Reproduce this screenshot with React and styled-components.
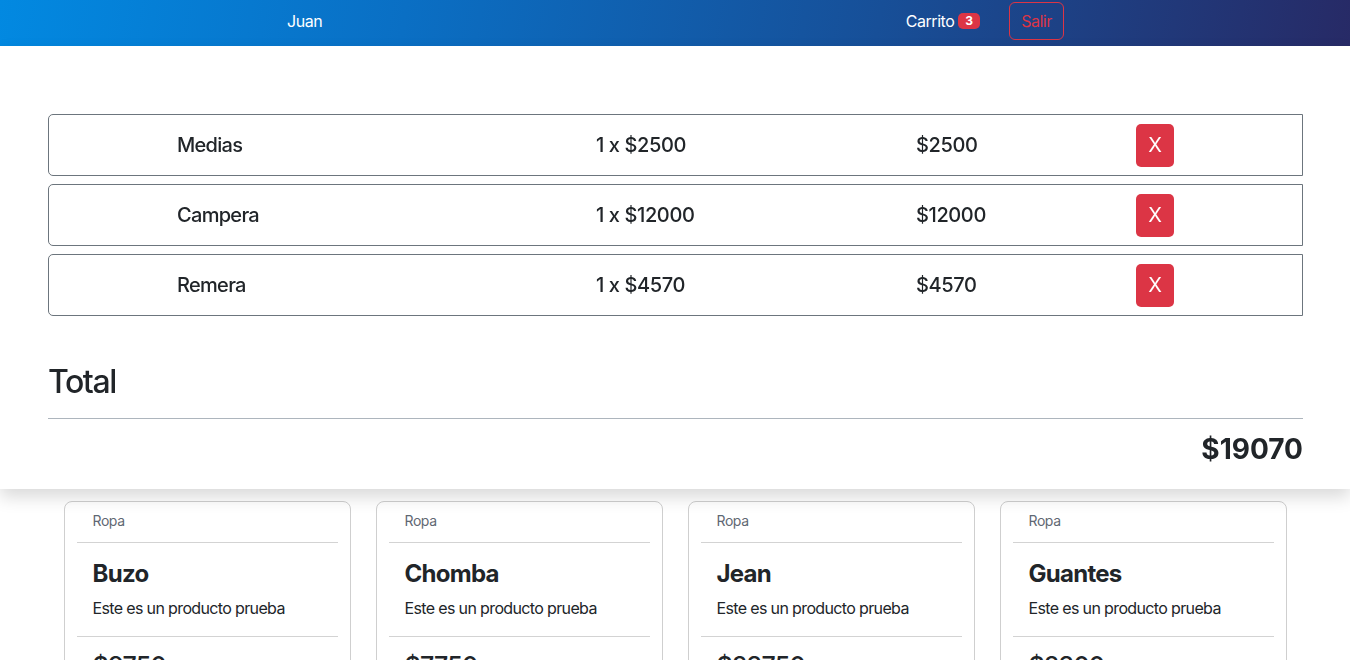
import React from "react";
import styled, { createGlobalStyle } from "styled-components";

const Global = createGlobalStyle`
  html, body { margin: 0; padding: 0; background: #fff; }
  body { font-family: Inter, "Noto Sans", sans-serif; color: #212529; }
  * { box-sizing: border-box; }
`;

const Nav = styled.nav`
  height: 46px;
  background: linear-gradient(100deg, #0289e1 0%, #0a6fc4 30%, #174f98 65%, #272a66 100%);
  display: flex;
  align-items: center;
  padding: 0 286px 4px 287px;
`;

const NavUser = styled.span`
  color: #fff;
  font-size: 16px;
  letter-spacing: -0.03em;
  flex: 1;
`;

const CartLink = styled.span`
  color: #fff;
  font-size: 16px;
  letter-spacing: -0.03em;
  display: flex;
  align-items: center;
  gap: 4px;
  margin-right: 29px;
`;

const Badge = styled.span`
  background: #dc3545;
  color: #fff;
  font-size: 12px;
  font-weight: 700;
  letter-spacing: 0;
  border-radius: 5px;
  padding: 1px 7px;
  line-height: 14px;
`;

const OutlineButton = styled.button`
  font-family: inherit;
  font-size: 16px;
  letter-spacing: -0.03em;
  color: #dc3545;
  background: transparent;
  border: 1px solid #dc3545;
  border-radius: 6px;
  width: 55px;
  height: 38px;
  padding: 0;
`;

const Main = styled.main`
  padding: 455px 0 0;
  display: grid;
  grid-template-columns: repeat(4, 287px);
  gap: 25px;
  justify-content: center;
`;

const Card = styled.div`
  border: 1px solid #cfcfcf;
  border-radius: 8px;
  padding: 0 12px;
  height: 220px;
`;

const CardHeader = styled.div`
  padding: 0 16px 3px;
  height: 41px;
  display: flex;
  align-items: center;
  font-size: 14px;
  letter-spacing: -0.03em;
  color: #5f6873;
  border-bottom: 1px solid #d3d3d3;
`;

const CardBody = styled.div`
  padding: 16px;
  border-bottom: 1px solid #d3d3d3;
`;

const CardTitle = styled.h5`
  margin: 0 0 8px;
  font-size: 24px;
  font-weight: 700;
  line-height: 29px;
  letter-spacing: -0.03em;
`;

const CardText = styled.p`
  margin: 0;
  font-size: 16px;
  line-height: 24px;
  letter-spacing: -0.04em;
`;

const CardPrice = styled.div`
  padding: 14px 16px 0;
  font-size: 25px;
  font-weight: 500;
  letter-spacing: -0.03em;
`;

const Offcanvas = styled.section`
  position: fixed;
  top: 46px;
  left: 0;
  right: 0;
  height: 443px;
  background: #fff;
  box-shadow: 0 8px 16px rgba(0, 0, 0, 0.15);
  padding: 68px 47px 0 48px;
  z-index: 10;
`;

const List = styled.div`
  display: flex;
  flex-direction: column;
  gap: 8px;
`;

const Row = styled.div`
  height: 62px;
  border: 1px solid #6c757d;
  border-radius: 5px 0 0 5px;
  display: grid;
  grid-template-columns: 128px 419px 320px 220px 1fr;
  align-items: center;
  font-size: 20px;
  font-weight: 500;
  letter-spacing: -0.035em;
`;

const Cell = styled.span`
  grid-column: ${(p) => p.col};
  letter-spacing: ${(p) => (p.numeric ? "-0.02em" : "inherit")};
`;

const RemoveButton = styled.button`
  grid-column: 5;
  width: 38px;
  height: 43px;
  background: #dc3545;
  color: #fff;
  border: none;
  border-radius: 5px;
  font-family: inherit;
  font-size: 20px;
  padding: 0;
`;

const TotalTitle = styled.h2`
  margin: 47px 0 0;
  font-size: 32px;
  font-weight: 500;
  line-height: 38px;
  letter-spacing: -0.045em;
`;

const Rule = styled.hr`
  margin: 17px 0 0;
  border: none;
  border-top: 1px solid #adb5bd;
`;

const TotalValue = styled.div`
  margin-top: 13px;
  text-align: right;
  font-size: 28px;
  font-weight: 700;
  line-height: 34px;
`;

const cart = [
  { name: "Medias", qty: 1, price: 2500 },
  { name: "Campera", qty: 1, price: 12000 },
  { name: "Remera", qty: 1, price: 4570 },
];

const products = [
  { name: "Buzo", price: 9750 },
  { name: "Chomba", price: 7750 },
  { name: "Jean", price: 23750 },
  { name: "Guantes", price: 2300 },
];

export default function App() {
  const total = cart.reduce((s, i) => s + i.qty * i.price, 0);
  return (
    <>
      <Global />
      <Nav>
        <NavUser>Juan</NavUser>
        <CartLink>
          Carrito <Badge>3</Badge>
        </CartLink>
        <OutlineButton>Salir</OutlineButton>
      </Nav>
      <Main>
        {products.map((p) => (
          <Card key={p.name}>
            <CardHeader>Ropa</CardHeader>
            <CardBody>
              <CardTitle>{p.name}</CardTitle>
              <CardText>Este es un producto prueba</CardText>
            </CardBody>
            <CardPrice>${p.price}</CardPrice>
          </Card>
        ))}
      </Main>
      <Offcanvas>
        <List>
          {cart.map((i) => (
            <Row key={i.name}>
              <Cell col={2}>{i.name}</Cell>
              <Cell col={3} numeric>
                {i.qty} x ${i.price}
              </Cell>
              <Cell col={4} numeric>${i.qty * i.price}</Cell>
              <RemoveButton>X</RemoveButton>
            </Row>
          ))}
        </List>
        <TotalTitle>Total</TotalTitle>
        <Rule />
        <TotalValue>${total}</TotalValue>
      </Offcanvas>
    </>
  );
}
